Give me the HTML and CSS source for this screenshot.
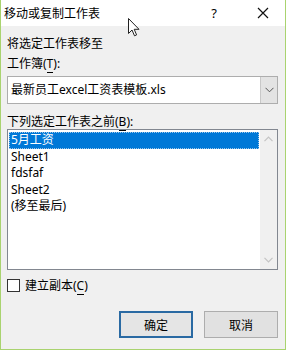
FILE: index.html
```html
<!DOCTYPE html>
<html lang="zh-CN">

<head>
  <meta charset="UTF-8">
  <title>移动或复制工作表</title>
  <link rel="stylesheet" href="styles.css">
</head>

<body>
  <div class="dialog">
    <div class="titlebar">
      <span class="title">移动或复制工作表</span>
      <span class="help">?</span>
      <span class="close">
        <svg width="12" height="12" viewBox="0 0 12 12">
          <path d="M1 1 L11 11 M11 1 L1 11" stroke="#111" stroke-width="1.2" fill="none" />
        </svg>
      </span>
    </div>

    <div class="body">
      <div class="label first">将选定工作表移至</div>
      <div class="label">工作簿(<u>T</u>):</div>

      <div class="combo">
        <div class="combo-text">最新员工excel工资表模板.xls</div>
        <div class="combo-btn">
          <svg width="9" height="6" viewBox="0 0 9 6">
            <path d="M0.5 0.8 L4.5 4.8 L8.5 0.8" stroke="#555" stroke-width="1" fill="none" />
          </svg>
        </div>
      </div>

      <div class="label">下列选定工作表之前(<u>B</u>):</div>

      <div class="listbox">
        <ul class="items">
          <li class="selected">5月工资</li>
          <li>Sheet1</li>
          <li>fdsfaf</li>
          <li>Sheet2</li>
          <li>(移至最后)</li>
        </ul>
        <div class="scrollbar">
          <svg width="9" height="6" viewBox="0 0 9 6">
            <path d="M0.5 5.2 L4.5 1.2 L8.5 5.2" stroke="#c4c4c4" stroke-width="1.2" fill="none" />
          </svg>
          <svg width="9" height="6" viewBox="0 0 9 6">
            <path d="M0.5 0.8 L4.5 4.8 L8.5 0.8" stroke="#c4c4c4" stroke-width="1.2" fill="none" />
          </svg>
        </div>
      </div>

      <label class="check">
        <span class="box"></span>
        <span>建立副本(<u>C</u>)</span>
      </label>

      <div class="buttons">
        <button class="btn default">确定</button>
        <button class="btn">取消</button>
      </div>
    </div>

    <!-- mouse pointer over the dialog -->
    <svg class="cursor" width="12" height="19" viewBox="0 0 12 19">
      <path d="M0.5 0.5 L0.5 15.5 L4 12 L6.5 17.8 L8.6 16.9 L6.2 11.3 L11 11.3 Z" fill="#fff" stroke="#222"
        stroke-width="1" />
    </svg>
  </div>
</body>

</html>
```

FILE: styles.css
```css
body {
  margin: 0;
  font-family: "Noto Sans", "Noto Sans CJK SC", sans-serif;
  font-size: 12px;
  color: #000;
  background: #fff;
}

.dialog {
  position: relative;
  width: 286px;
  height: 350px;
  box-sizing: border-box;
  border: 1px solid #a9d36f;
  border-top: none;
  background: #f0f0f0;
  display: flex;
  flex-direction: column;
}

.titlebar {
  height: 26px;
  background: #fff;
  display: flex;
  align-items: center;
  padding-left: 3px;
}

.title {
  flex: 1;
  font-size: 12px;
}

.help {
  width: 16px;
  text-align: center;
  font-size: 13px;
  margin-right: 35px;
}

.close {
  width: 12px;
  height: 12px;
  display: flex;
  margin-right: 16px;
}

.body {
  padding: 0 7px 0 6px;
}

.label {
  height: 16px;
  line-height: 16px;
  margin-top: 4px;
}

.label.first {
  margin-top: 10px;
}

.label u,
.check u {
  text-decoration: none;
  border-bottom: 1px solid #000;
}

.combo {
  margin-top: 4px;
  margin-bottom: 10px;
  height: 28px;
  box-sizing: border-box;
  border: 1px solid #adadad;
  background: #fff;
  display: flex;
}

.combo-text {
  flex: 1;
  line-height: 26px;
  padding-left: 3px;
}

.combo-btn {
  width: 16px;
  background: #e3e3e3;
  border-left: 1px solid #c8c8c8;
  display: flex;
  align-items: center;
  justify-content: center;
}

.listbox {
  margin-top: -1px;
  height: 141px;
  box-sizing: border-box;
  border: 1px solid #828790;
  background: #fff;
  display: flex;
}

.items {
  list-style: none;
  margin: 0;
  padding: 2px 1px 0 1px;
  flex: 1;
}

.items li {
  height: 16.5px;
  line-height: 16px;
  padding-left: 2px;
}

.items li.selected {
  background: #0078d7;
  color: #fff;
  outline: 1px dotted #9cc6ea;
  outline-offset: -1px;
}

.scrollbar {
  width: 17px;
  background: #f0f0f0;
  display: flex;
  flex-direction: column;
  justify-content: space-between;
  align-items: center;
  padding: 6px 0 6px 0;
}

.check {
  display: flex;
  align-items: center;
  gap: 5px;
  margin-top: 7px;
  height: 16px;
}

.box {
  width: 11px;
  height: 11px;
  border: 1px solid #333;
  background: #fff;
}

.buttons {
  display: flex;
  justify-content: flex-end;
  gap: 11px;
  margin-top: 18px;
}

.btn {
  width: 74px;
  height: 27px;
  box-sizing: border-box;
  font-family: "Noto Sans CJK SC", sans-serif;
  font-size: 12px;
  background: #e1e1e1;
  border: 1px solid #adadad;
  padding: 0;
}

.btn.default {
  border: 2px solid #2a6aa3;
  background: #e5e5e5;
}

.cursor {
  position: absolute;
  left: 127px;
  top: 18px;
}
```
